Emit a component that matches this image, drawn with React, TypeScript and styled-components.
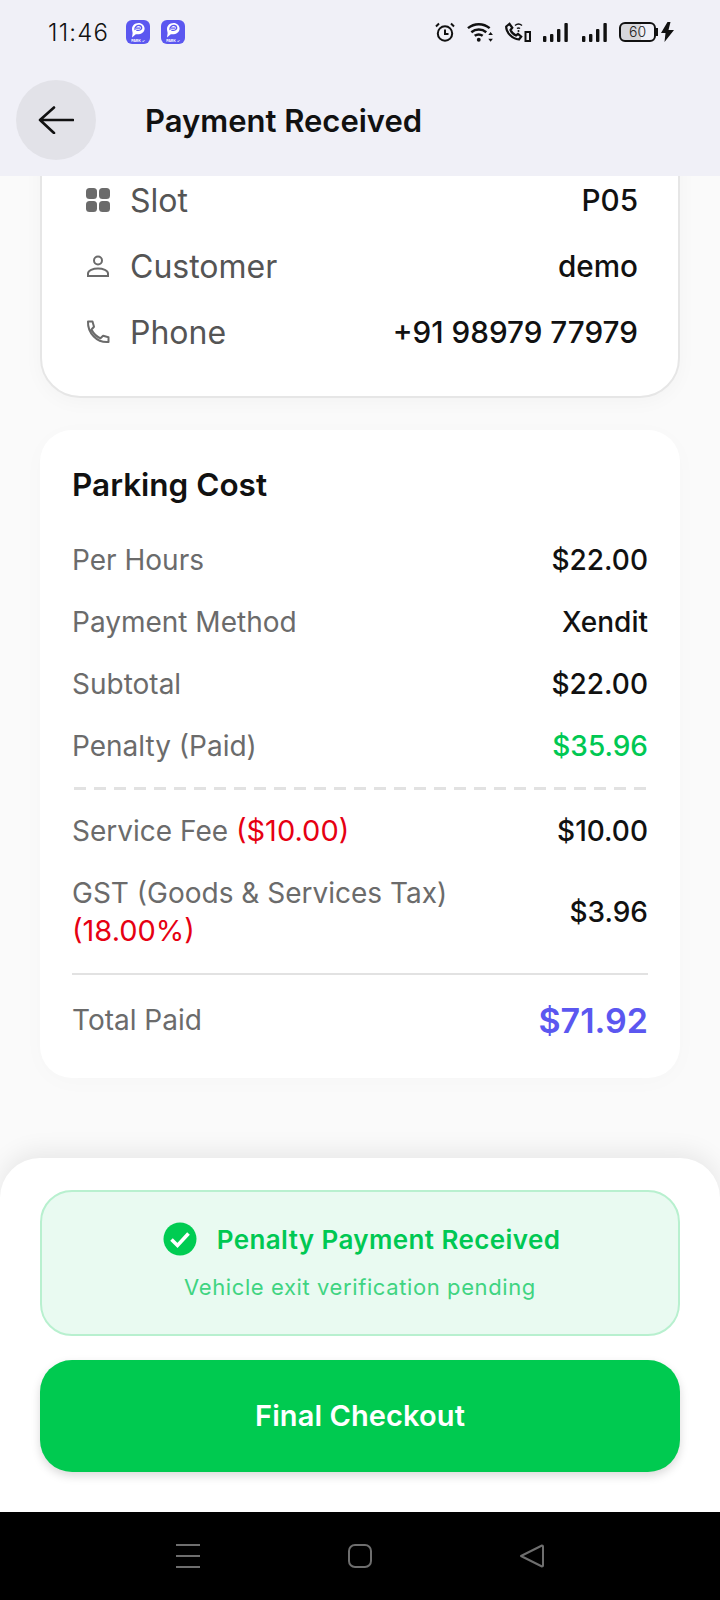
import React from 'react';
import styled, { createGlobalStyle } from 'styled-components';

const FONT = `Inter, "Noto Sans", "Liberation Sans", sans-serif`;

const GlobalStyle = createGlobalStyle`
    html, body {
        margin: 0;
        padding: 0;
        background: #fafafa;
    }
    * {
        box-sizing: border-box;
    }
`;

const AppIcon = () => (
    <svg width="24" height="24" viewBox="0 0 24 24">
        <rect width="24" height="24" rx="6" fill="#5b57f0" />
        <path d="M12.500 3C8.500 3 6 5.800 6 9c0 1.800.6 2.800.6 4.200L6 17.500l3.800-3.300c4.200.8 8.800-1.300 8.800-5.600C18.600 5.500 16 3 12.500 3z" fill="#fff" />
        <path d="M9 10c-.6-3 2-5 4.500-4.500 2.500.5 3 3.200 1 4.300-1.400.8-3.200.6-4.200.3" fill="none" stroke="#5b57f0" strokeWidth="1.300" />
        <rect x="10" y="7.500" width="4.500" height="1.200" fill="#5b57f0" />
        <text x="12" y="21.500" textAnchor="middle" fontSize="3.600" fontWeight="700" fill="#fff" fontFamily="Inter, sans-serif">PARK ✓</text>
    </svg>
);

const AlarmIcon = () => (
    <svg width="20" height="20" viewBox="0 0 20 20" fill="none" stroke="#111" strokeWidth="2">
        <circle cx="10" cy="11.500" r="7.200" />
        <path d="M10 7.500v4.500h3.500M1 4.500L4 1.500M19 4.500L16 1.500" />
    </svg>
);

const WifiIcon = () => (
    <svg width="26" height="20" viewBox="0 0 27 20" fill="none" stroke="#111" strokeWidth="2.600">
        <path d="M1 6c6.500-5.500 16-5.500 22.500 0M4.500 10.200c4.500-3.600 11-3.600 15.500 0M8 14c2.500-1.800 5.800-1.800 8.300 0" />
        <circle cx="12.200" cy="18" r="2" fill="#111" stroke="none" />
        <path d="M24.500 10l-2.400 3h4.800zM24.500 20l-2.400-3h4.800z" fill="#111" stroke="none" />
    </svg>
);

const CallIcon = () => (
    <svg width="26" height="20" viewBox="0 0 26 20" fill="none" stroke="#111" strokeWidth="2.200">
        <path d="M1.200 4.500L4.500 1.800l2.800 4-1.800 2.200c1 2.500 3 4.400 5.500 5.500l2-1.500 3.200 2.700-2.300 2.800C7.500 17 .8 10.500 1.200 4.500z" />
        <path d="M10 3.500c2-1.600 5-1.600 7 0M12 6.500c1-.8 2-.8 3 0" strokeWidth="1.500" />
        <circle cx="13.500" cy="9" r="1" fill="#111" stroke="none" />
        <rect x="20.500" y="10" width="4.500" height="9" strokeWidth="2" />
    </svg>
);

const SignalIcon = () => (
    <svg width="25" height="20" viewBox="0 0 25 20" fill="#111">
        <rect x="0" y="14" width="3.400" height="6" rx="1" />
        <rect x="7" y="12" width="3.400" height="8" rx="1" />
        <rect x="14" y="7" width="3.400" height="13" rx="1" />
        <rect x="21.400" y="1" width="3.400" height="19" rx="1" />
    </svg>
);

const BoltIcon = () => (
    <svg width="13" height="20" viewBox="0 0 13 20" fill="#111">
        <path d="M6.500 0L0 11h4.500L3.500 20 13 8H7.500L9.500 0z" />
    </svg>
);

const BackIcon = () => (
    <svg width="36" height="28" viewBox="0 0 36 28" fill="none" stroke="#111" strokeWidth="2.600" strokeLinecap="round" strokeLinejoin="round">
        <path d="M16 1.500L2 14l14 13M2 14h33" />
    </svg>
);

const SlotIcon = () => (
    <svg width="24" height="24" viewBox="0 0 24 24" fill="#6b6b6b">
        <rect width="11" height="11" rx="3.500" />
        <rect x="13" width="11" height="11" rx="3.500" />
        <rect y="13" width="11" height="11" rx="3.500" />
        <rect x="13" y="13" width="11" height="11" rx="3.500" />
    </svg>
);

const PersonIcon = () => (
    <svg width="24" height="24" viewBox="0 0 24 24" fill="none" stroke="#6b6b6b" strokeWidth="2">
        <circle cx="12" cy="6.500" r="4" />
        <path d="M2 22v-2.500c0-3 5-5 10-5s10 2 10 5V22z" />
    </svg>
);

const PhoneIcon = () => (
    <svg width="24" height="24" viewBox="0 0 24 24" fill="none" stroke="#6b6b6b" strokeWidth="2" strokeLinejoin="round">
        <path d="M2 1.500h4.500L8 6.800 5.500 9.500c1.800 3.800 5 7 9 8.800l2.600-2.500 5.400 1.400V22C11 23 1.500 13 2 1.500z" />
    </svg>
);

const CheckIcon = () => (
    <svg width="34" height="34" viewBox="0 0 34 34" fill="none">
        <circle cx="17" cy="17" r="16.500" fill="#00cc52" />
        <path d="M8.500 17.500l6 6L25.500 11.500" stroke="#fff" strokeWidth="3.600" />
    </svg>
);

const details = [
    { icon: <SlotIcon />, label: 'Slot', value: 'P05' },
    { icon: <PersonIcon />, label: 'Customer', value: 'demo' },
    { icon: <PhoneIcon />, label: 'Phone', value: '+91 98979 77979' },
];

const costs = [
    { label: 'Per Hours', value: '$22.00' },
    { label: 'Payment Method', value: 'Xendit' },
    { label: 'Subtotal', value: '$22.00' },
    { label: 'Penalty (Paid)', value: '$35.96', green: true },
];

const App: React.FC = () => {
    return (
        <Page>
            <GlobalStyle />
            <Top>
                <StatusBar>
                    <StatusLeft>
                        <Time>11:46</Time>
                        <AppIcon />
                        <AppIcon />
                    </StatusLeft>
                    <StatusRight>
                        <AlarmIcon />
                        <WifiIcon />
                        <CallIcon />
                        <SignalGroup>
                            <SignalIcon />
                            <SignalIcon />
                        </SignalGroup>
                        <Battery>
                            <BatteryBody>60</BatteryBody>
                            <BatteryTip />
                            <BoltIcon />
                        </Battery>
                    </StatusRight>
                </StatusBar>
                <Header>
                    <BackButton>
                        <BackIcon />
                    </BackButton>
                    <Title>Payment Received</Title>
                </Header>
            </Top>
            <Scroll>
                <DetailCard>
                    {details.map((d) => (
                        <DetailRow key={d.label}>
                            <DetailIcon>{d.icon}</DetailIcon>
                            <DetailLabel>{d.label}</DetailLabel>
                            <DetailValue>{d.value}</DetailValue>
                        </DetailRow>
                    ))}
                </DetailCard>
                <CostCard>
                    <CostTitle>Parking Cost</CostTitle>
                    {costs.map((c) => (
                        <CostRow key={c.label}>
                            <CostLabel>{c.label}</CostLabel>
                            <CostValue $green={c.green}>{c.value}</CostValue>
                        </CostRow>
                    ))}
                    <Dashed />
                    <CostRow>
                        <CostLabel>
                            Service Fee <Red>($10.00)</Red>
                        </CostLabel>
                        <CostValue>$10.00</CostValue>
                    </CostRow>
                    <CostRow $tall>
                        <CostLabel>
                            GST (Goods &amp; Services Tax)
                            <br />
                            <Red>(18.00%)</Red>
                        </CostLabel>
                        <CostValue>$3.96</CostValue>
                    </CostRow>
                    <Solid />
                    <TotalRow>
                        <CostLabel>Total Paid</CostLabel>
                        <TotalValue>$71.92</TotalValue>
                    </TotalRow>
                </CostCard>
            </Scroll>
            <Sheet>
                <Banner>
                    <BannerHead>
                        <CheckIcon />
                        <BannerTitle>Penalty Payment Received</BannerTitle>
                    </BannerHead>
                    <BannerSub>Vehicle exit verification pending</BannerSub>
                </Banner>
                <CheckoutButton>Final Checkout</CheckoutButton>
            </Sheet>
            <NavBar>
                <svg width="24" height="24" viewBox="0 0 24 24" stroke="#6e6e6e" strokeWidth="2">
                    <path d="M0 1h24M0 12h24M0 23h24" />
                </svg>
                <svg width="24" height="24" viewBox="0 0 24 24" fill="none" stroke="#6e6e6e" strokeWidth="2">
                    <rect x="1" y="1" width="22" height="22" rx="6" />
                </svg>
                <svg width="24" height="24" viewBox="0 0 24 24" fill="none" stroke="#6e6e6e" strokeWidth="2" strokeLinejoin="round">
                    <path d="M1 12L22 1.500c.500 0 1 .500 1 1v19c0 .500-.500 1-1 1z" />
                </svg>
            </NavBar>
        </Page>
    );
};

const Page = styled.div`
    display: flex;
    flex-direction: column;
    width: 720px;
    height: 1600px;
    overflow: hidden;
    font-family: ${FONT};
    background: #fafafa;
`;

const Top = styled.div`
    position: relative;
    z-index: 2;
    height: 176px;
    background: #f0f0f7;
`;

const StatusBar = styled.div`
    display: flex;
    align-items: center;
    justify-content: space-between;
    height: 64px;
    padding: 0 46px 0 48px;
`;

const StatusLeft = styled.div`
    display: flex;
    align-items: center;
    gap: 11px;
`;

const Time = styled.span`
    margin-right: 6px;
    font-size: 24px;
    font-weight: 300;
    color: #111;
    letter-spacing: 1.2px;
`;

const StatusRight = styled.div`
    display: flex;
    align-items: center;
    gap: 12px;
`;

const SignalGroup = styled.div`
    display: flex;
    gap: 14px;
`;

const Battery = styled.div`
    display: flex;
    align-items: center;
`;

const BatteryBody = styled.div`
    width: 37px;
    height: 20px;
    border: 2px solid #111;
    border-radius: 6px;
    font-size: 14px;
    font-weight: 300;
    line-height: 16px;
    text-align: center;
    color: #222;
    background: linear-gradient(to right, #d6d6da 60%, transparent 60%);
`;

const BatteryTip = styled.div`
    width: 2px;
    height: 8px;
    margin-right: 3px;
    background: #111;
`;

const Header = styled.div`
    display: flex;
    align-items: center;
    gap: 49px;
    padding: 16px 16px 0;
`;

const BackButton = styled.div`
    display: flex;
    align-items: center;
    justify-content: center;
    width: 80px;
    height: 80px;
    border-radius: 50%;
    background: #e2e2e8;
`;

const Title = styled.h1`
    margin: 0;
    font-size: 31px;
    font-weight: 600;
    color: #111;
`;

const Scroll = styled.div`
    flex: 1;
    min-height: 0;
    padding: 0 40px;
    overflow: hidden;
`;

const DetailCard = styled.div`
    margin-top: -60px;
    padding: 49px 40px 31px 44px;
    background: #fff;
    border: 2px solid #e6e6e6;
    border-radius: 40px;
    box-shadow: 0 4px 20px rgba(0, 0, 0, 0.03);
`;

const DetailRow = styled.div`
    display: flex;
    align-items: center;
    height: 66px;
`;

const DetailIcon = styled.div`
    display: flex;
    width: 44px;
`;

const DetailLabel = styled.span`
    flex: 1;
    font-size: 32px;
    color: #555;
`;

const DetailValue = styled.span`
    font-size: 29.700px;
    font-weight: 500;
    color: #111;
`;

const CostCard = styled.div`
    margin-top: 32px;
    padding: 33px 32px 27px;
    background: #fff;
    border-radius: 32px;
    box-shadow: 0 4px 24px rgba(0, 0, 0, 0.02);
`;

const CostTitle = styled.h2`
    margin: 0 0 22px;
    font-size: 31.500px;
    line-height: 44px;
    font-weight: 600;
    color: #111;
`;

const CostRow = styled.div<{ $tall?: boolean }>`
    display: flex;
    align-items: center;
    justify-content: space-between;
    min-height: 62px;
    padding: ${(p) => (p.$tall ? '13px 0 11px' : '0')};
`;

const CostLabel = styled.span`
    font-size: 28px;
    line-height: 37px;
    color: #6b6b6b;
`;

const CostValue = styled.span<{ $green?: boolean }>`
    font-size: 28px;
    font-weight: 500;
    color: ${(p) => (p.$green ? '#00c853' : '#111')};
`;

const Red = styled.span`
    font-size: 29px;
    color: #e60012;
`;

const Dashed = styled.div`
    height: 2.500px;
    margin: 10px 0;
    background: repeating-linear-gradient(to right, #e2e2e2 0 12px, transparent 12px 20px);
    background-position: 2px 0;
`;

const Solid = styled.div`
    margin: 12px 0 16px;
    border-top: 2px solid #e2e2e2;
`;

const TotalRow = styled.div`
    display: flex;
    align-items: center;
    justify-content: space-between;
    height: 60px;
`;

const TotalValue = styled.span`
    font-size: 34px;
    font-weight: 600;
    color: #5b57f0;
`;

const Sheet = styled.div`
    position: relative;
    display: flex;
    flex-direction: column;
    gap: 24px;
    padding: 32px 40px 40px;
    background: #fff;
    border-radius: 40px 40px 0 0;
    box-shadow: 0 -6px 24px rgba(0, 0, 0, 0.08);
`;

const Banner = styled.div`
    display: flex;
    flex-direction: column;
    align-items: center;
    height: 146px;
    padding-top: 30px;
    background: #e9faf1;
    border: 2px solid #b8f0cf;
    border-radius: 32px;
`;

const BannerHead = styled.div`
    display: flex;
    align-items: center;
    gap: 20px;
    padding-left: 3px;
`;

const BannerTitle = styled.span`
    font-size: 26px;
    font-weight: 600;
    letter-spacing: 0.4px;
    color: #00c853;
`;

const BannerSub = styled.div`
    margin-top: 18px;
    font-size: 22px;
    letter-spacing: 0.6px;
    color: #3fd481;
`;

const CheckoutButton = styled.button`
    height: 112px;
    padding-bottom: 3px;
    border: none;
    border-radius: 32px;
    font-family: inherit;
    font-size: 29px;
    font-weight: 600;
    letter-spacing: 0.1px;
    color: #fff;
    background: #00ca50;
    box-shadow: 0 4px 10px rgba(0, 0, 0, 0.15);
`;

const NavBar = styled.div`
    position: relative;
    display: flex;
    flex: none;
    align-items: center;
    justify-content: space-between;
    height: 88px;
    padding: 0 176px;
    background: #000;
`;

export default App;
